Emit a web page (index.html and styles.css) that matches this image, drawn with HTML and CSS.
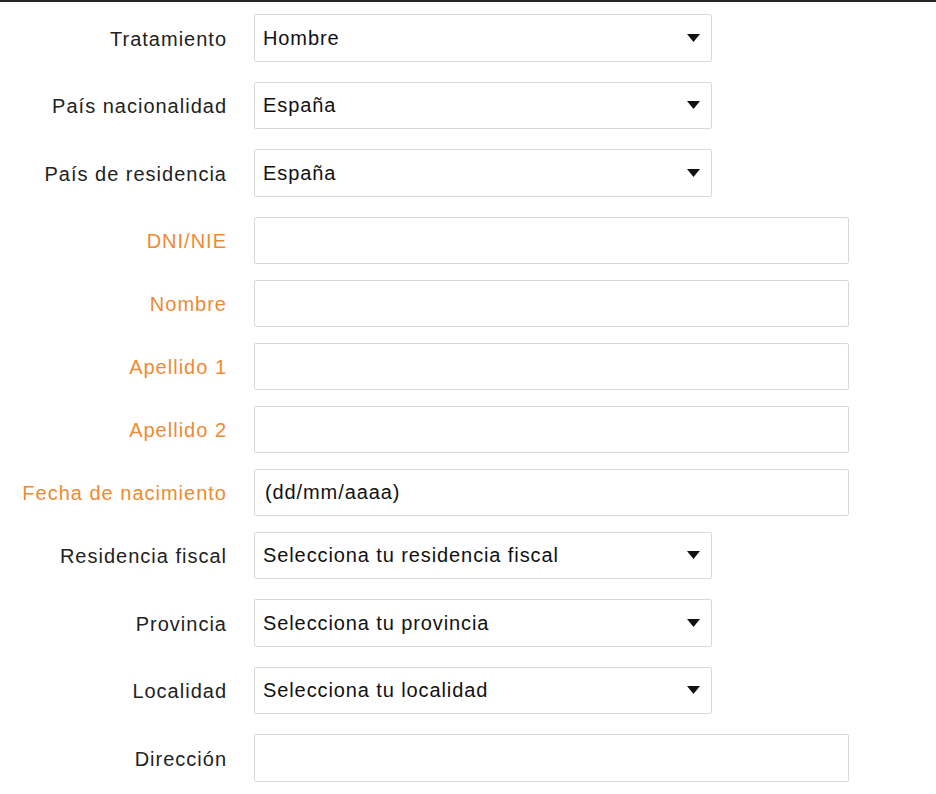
FILE: index.html
```html
<!DOCTYPE html>
<html lang="es">
<head>
<meta charset="utf-8">
<title>Formulario</title>
<link rel="stylesheet" href="styles.css">
</head>
<body>
<div class="topbar"></div>
<form class="form">
  <div class="row row-select">
    <label class="label">Tratamiento</label>
    <div class="select"><span>Hombre</span><svg class="arrow" width="13" height="8" viewBox="0 0 13 8"><path d="M0 0H13L6.5 8Z"/></svg></div>
  </div>
  <div class="row row-select">
    <label class="label">País nacionalidad</label>
    <div class="select"><span>España</span><svg class="arrow" width="13" height="8" viewBox="0 0 13 8"><path d="M0 0H13L6.5 8Z"/></svg></div>
  </div>
  <div class="row row-select">
    <label class="label">País de residencia</label>
    <div class="select"><span>España</span><svg class="arrow" width="13" height="8" viewBox="0 0 13 8"><path d="M0 0H13L6.5 8Z"/></svg></div>
  </div>
  <div class="row row-input">
    <label class="label required">DNI/NIE</label>
    <div class="input"></div>
  </div>
  <div class="row row-input">
    <label class="label required">Nombre</label>
    <div class="input"></div>
  </div>
  <div class="row row-input">
    <label class="label required">Apellido 1</label>
    <div class="input"></div>
  </div>
  <div class="row row-input">
    <label class="label required">Apellido 2</label>
    <div class="input"></div>
  </div>
  <div class="row row-input">
    <label class="label required">Fecha de nacimiento</label>
    <div class="input"><span>(dd/mm/aaaa)</span></div>
  </div>
  <div class="row row-select">
    <label class="label">Residencia fiscal</label>
    <div class="select"><span>Selecciona tu residencia fiscal</span><svg class="arrow" width="13" height="8" viewBox="0 0 13 8"><path d="M0 0H13L6.5 8Z"/></svg></div>
  </div>
  <div class="row row-select">
    <label class="label">Provincia</label>
    <div class="select"><span>Selecciona tu provincia</span><svg class="arrow" width="13" height="8" viewBox="0 0 13 8"><path d="M0 0H13L6.5 8Z"/></svg></div>
  </div>
  <div class="row row-select">
    <label class="label">Localidad</label>
    <div class="select"><span>Selecciona tu localidad</span><svg class="arrow" width="13" height="8" viewBox="0 0 13 8"><path d="M0 0H13L6.5 8Z"/></svg></div>
  </div>
  <div class="row row-input">
    <label class="label">Dirección</label>
    <div class="input"></div>
  </div>
</form>
</body>
</html>
```
FILE: styles.css
```css
html, body {
  margin: 0;
  padding: 0;
  background: #ffffff;
}
body {
  font-family: "Liberation Sans", Arial, sans-serif;
  font-size: 20px;
  letter-spacing: 0.9px;
  color: #1a1a1a;
  overflow: hidden;
}
.topbar {
  height: 2px;
  background: #262626;
}
.form {
  display: flex;
  flex-direction: column;
  padding-top: 12px;
}
.row {
  display: flex;
  align-items: center;
  gap: 27px;
  height: 47.5px;
}
.row-select {
  margin-bottom: 20px;
}
.row-input {
  margin-bottom: 15.5px;
}
.label {
  width: 227px;
  text-align: right;
  color: #222222;
  padding-top: 3px;
  letter-spacing: 1px;
}
.label.required {
  color: #ef8a33;
}
.select, .input {
  box-sizing: border-box;
  height: 100%;
  border: 1px solid #d9d9d9;
  border-radius: 2px;
  display: flex;
  align-items: center;
  padding-left: 8px;
  background: #fff;
  color: #111;
}
.select {
  width: 458px;
  justify-content: space-between;
  padding-right: 11px;
}
.input {
  width: 595px;
  padding-left: 10px;
}
.select span, .input span {
  padding-top: 1px;
}
.arrow {
  fill: #111;
  display: block;
}
```
